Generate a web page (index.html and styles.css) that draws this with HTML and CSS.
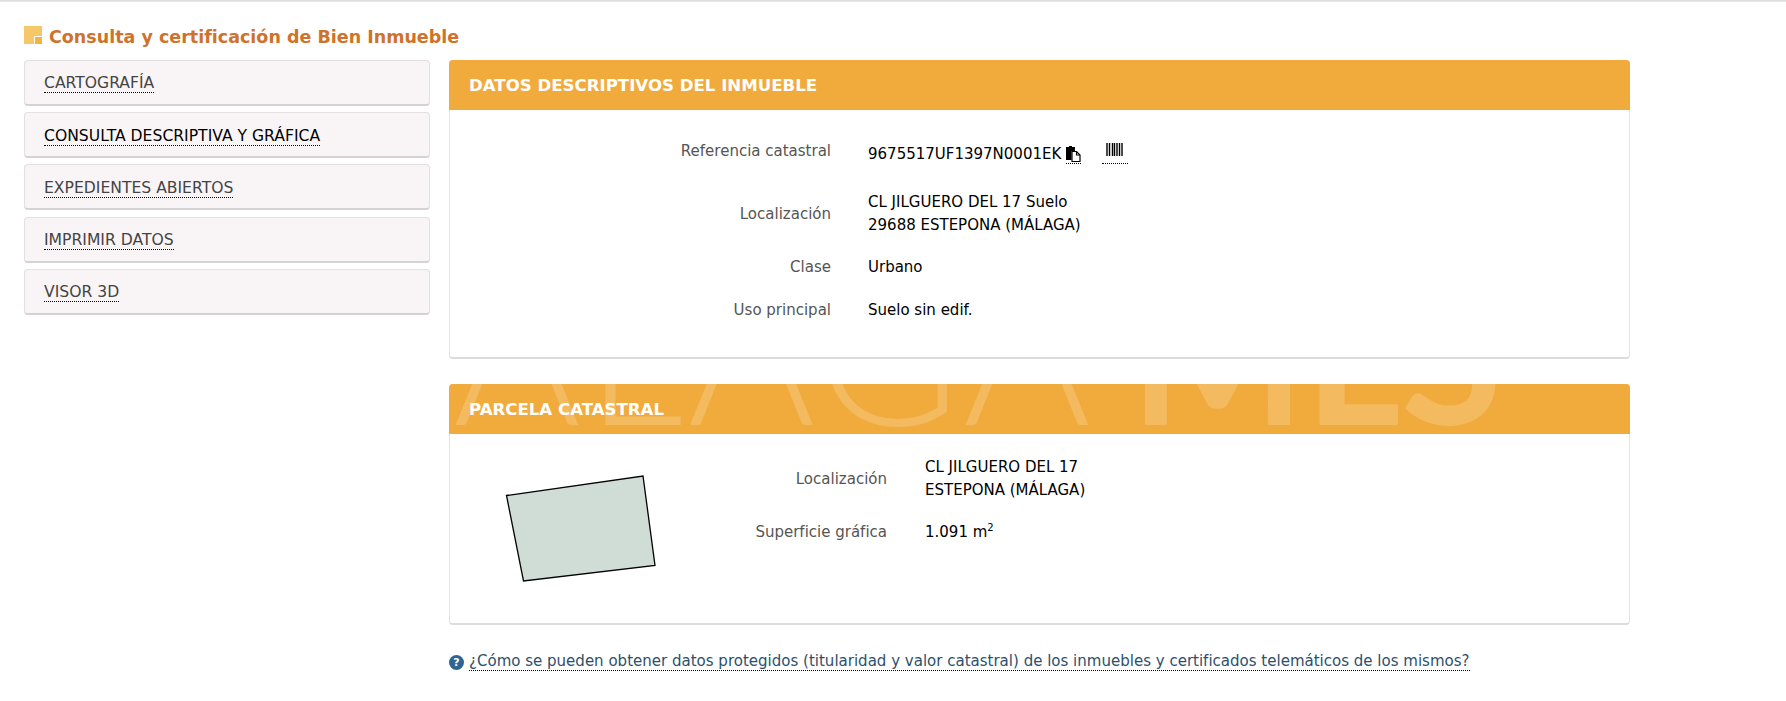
FILE: index.html
```html
<!DOCTYPE html>
<html lang="es">
<head>
<meta charset="utf-8">
<title>Consulta y certificación de Bien Inmueble</title>
<link rel="stylesheet" href="styles.css">
</head>
<body>
<div class="topline"></div>
<h1 class="page-title"><span class="title-icon"></span>Consulta y certificación de Bien Inmueble</h1>
<div class="layout">
  <nav class="side">
    <div class="side-item"><a>CARTOGRAFÍA</a></div>
    <div class="side-item active"><a>CONSULTA DESCRIPTIVA Y GRÁFICA</a></div>
    <div class="side-item"><a>EXPEDIENTES ABIERTOS</a></div>
    <div class="side-item"><a>IMPRIMIR DATOS</a></div>
    <div class="side-item"><a>VISOR 3D</a></div>
  </nav>
  <main class="content">
    <section class="panel panel-first">
      <header class="panel-head">DATOS DESCRIPTIVOS DEL INMUEBLE</header>
      <div class="rows rows-first">
        <div class="row row-ref">
          <div class="label">Referencia catastral</div>
          <div class="value ref-value">9675517UF1397N0001EK
            <a class="icon-link copy"><svg width="15" height="16" viewBox="0 0 15 16"><path d="M0 1h3V0h3v1h3v4H5.500v9H0z" fill="#000"/><path d="M6 5.500h4.500L14 9v6.500H6z" fill="#fff" stroke="#000" stroke-width="1.200"/><path d="M10.500 5.500V9H14" fill="none" stroke="#000" stroke-width="1.100"/></svg></a>
            <a class="icon-link barcode"><svg width="18" height="13" viewBox="0 0 18 13"><path d="M1 0v13M3.500 0v13M6.500 0v13M8.500 0v13M11 0v13M13.500 0v13M16 0v13" stroke="#000" stroke-width="1.400"/></svg></a>
          </div>
        </div>
        <div class="row row-loc">
          <div class="label">Localización</div>
          <div class="value">CL JILGUERO DEL 17 Suelo<br>29688 ESTEPONA (MÁLAGA)</div>
        </div>
        <div class="row row-clase">
          <div class="label">Clase</div>
          <div class="value">Urbano</div>
        </div>
        <div class="row row-uso">
          <div class="label">Uso principal</div>
          <div class="value">Suelo sin edif.</div>
        </div>
      </div>
    </section>
    <section class="panel panel-second">
      <header class="panel-head">
        <div class="watermark" aria-hidden="true"><span class="wm-thin">MALAGA</span><span class="wm-bold">MLS</span></div>
        <span class="head-text">PARCELA CATASTRAL</span>
      </header>
      <div class="parcel">
        <svg class="parcel-map" width="160" height="112" viewBox="0 0 160 112"><polygon points="1.500,20.500 138,1 150,90.500 18.500,106" fill="#d0ddd6" stroke="#000" stroke-width="1.300"/></svg>
        <div class="rows rows-second">
          <div class="row row-loc2">
            <div class="label">Localización</div>
            <div class="value">CL JILGUERO DEL 17<br>ESTEPONA (MÁLAGA)</div>
          </div>
          <div class="row">
            <div class="label">Superficie gráfica</div>
            <div class="value">1.091 m<sup>2</sup></div>
          </div>
        </div>
      </div>
    </section>
    <p class="help"><span class="help-icon">?</span><a>¿Cómo se pueden obtener datos protegidos (titularidad y valor catastral) de los inmuebles y certificados telemáticos de los mismos?</a></p>
  </main>
</div>
</body>
</html>
```
FILE: styles.css
```css
* { box-sizing: border-box; }
html, body { margin: 0; padding: 0; background: #fff; }
body { font-family: "DejaVu Sans", Verdana, sans-serif; font-size: 15px; color: #000; height: 701px; overflow: hidden; }
.topline { height: 2px; background: linear-gradient(#d8d8d8, #efefef); }
.page-title { margin: 0; padding: 24px 0 0 24px; height: 58px; display: flex; align-items: flex-start; font-size: 17.500px; line-height: 22px; font-weight: bold; color: #cf722b; }
.title-icon { width: 18px; height: 18px; margin-right: 7px; background: #f6c768; position: relative; flex: none; }
.title-icon::after { content: ""; position: absolute; right: 0; bottom: 0; width: 7px; height: 7px; background: #f0b540; border-left: 1px solid #fff; border-top: 1px solid #fff; }
.layout { display: flex; align-items: flex-start; padding-left: 24px; }
.side { width: 406px; margin-right: 19px; flex: none; display: flex; flex-direction: column; gap: 6.200px; }
.side-item { height: 46px; background: #f9f5f6; border: 1px solid #e2e0e0; border-bottom: 2px solid #d4d2d2; border-radius: 4px; padding: 13.400px 0 0 19px; font-size: 15.600px; line-height: 18px; color: #444; }
.side-item a { border-bottom: 1px dotted #000; display: inline-block; line-height: 18px; }
.side-item.active { color: #000; }
.content { width: 1181px; flex: none; }
.panel { border: 1px solid #e3e3e3; border-bottom: 2px solid #dcdcdc; border-radius: 4px; background: #fff; }
.panel-first { height: 299px; }
.panel-second { height: 241px; margin-top: 25px; }
.panel-head { height: 50px; margin: -1px -1px 0; background: #f1ab3c; border-radius: 4px 4px 0 0; color: #fff; font-weight: bold; font-size: 16.600px; line-height: 52px; padding-left: 20px; position: relative; overflow: hidden; }
.head-text { position: relative; }
.watermark { position: absolute; left: -177px; bottom: -17px; white-space: nowrap; color: rgba(255,255,255,.18); font-family: "Lato", sans-serif; font-weight: normal; line-height: 195px; font-size: 195px; }
.wm-thin { font-weight: 300; letter-spacing: 4px; }
.wm-bold { font-weight: 700; font-size: 185px; margin-left: 35px; }
.rows-first { padding-top: 30px; }
.row { display: flex; align-items: center; }
.label { width: 381px; text-align: right; color: #555; line-height: 23px; margin-right: 37px; flex: none; }
.value { line-height: 23px; color: #000; }
.row-ref { height: 22px; align-items: flex-start; }
.ref-value { padding-top: 3px; display: flex; align-items: flex-start; }
.icon-link { display: inline-block; border-bottom: 1px dotted #000; height: 21px; margin-left: 5px; }
.copy { width: 15px; }
.copy svg { display: block; margin-top: 3px; }
.barcode { width: 26px; margin-left: 21px; padding-left: 4px; }
.barcode svg { display: block; margin-top: 0; }
.row-loc { margin-top: 29px; }
.row-clase { margin-top: 19px; }
.row-uso { margin-top: 20px; }
.parcel { position: relative; display: flex; align-items: flex-start; }
.parcel-map { margin: 41px 0 0 55px; flex: none; }
.rows-second { padding-top: 22px; margin-left: -4px; }
.rows-second .label { width: 226px; margin-right: 38px; }
.rows-second .row-loc2 { margin-bottom: 19px; }
sup { font-size: 10px; line-height: 0; }
.help { margin: 28px 0 0; display: flex; align-items: center; font-size: 15.030px; line-height: 18px; color: #2d4f6c; }
.help-icon { width: 15px; height: 15px; border-radius: 50%; background: #2f6590; color: #fff; font-size: 11px; font-weight: bold; line-height: 15px; text-align: center; margin-right: 5px; flex: none; }
.help a { border-bottom: 1px dotted #000; line-height: 17px; }
```
